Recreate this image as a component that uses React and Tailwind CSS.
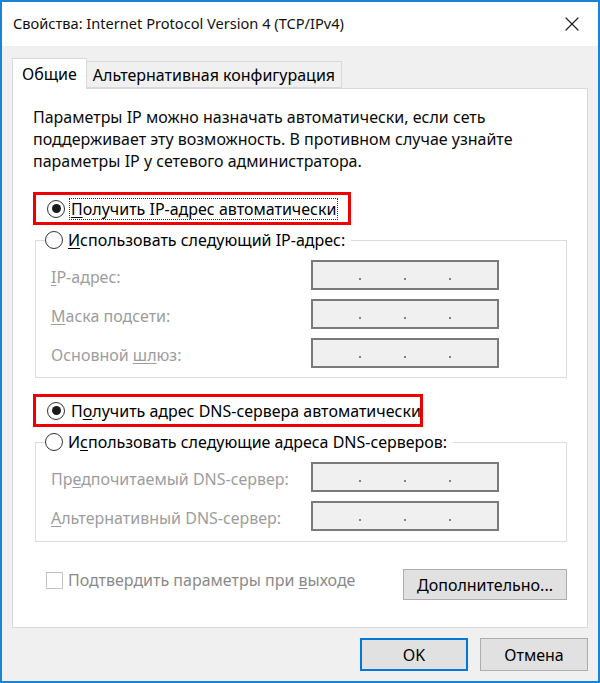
import { X } from 'lucide-react'

const font = { fontFamily: '"Noto Sans", "Open Sans", sans-serif' }

function Radio({ checked }) {
  return (
    <span className="w-[18px] h-[18px] rounded-full border-[1.5px] border-[#333] bg-white flex items-center justify-center shrink-0">
      {checked && <span className="w-[9px] h-[9px] rounded-full bg-[#1a1a1a]" />}
    </span>
  )
}

function IpField() {
  return (
    <div className="w-[188px] h-[30px] border-2 border-[#7a7a7a] bg-[#f0f0f0] flex items-end justify-center gap-[43px] pb-[8px]">
      <span className="w-[2px] h-[2px] bg-[#5a5a78] rounded-full" />
      <span className="w-[2px] h-[2px] bg-[#5a5a78] rounded-full" />
      <span className="w-[2px] h-[2px] bg-[#5a5a78] rounded-full" />
    </div>
  )
}

function FieldRow({ u, rest, pre = '' }) {
  return (
    <div className="flex items-center justify-between h-[30px]">
      <span className="text-[#9d9d9d] pt-[3px] whitespace-nowrap">
        {pre}
        <span className="underline underline-offset-2">{u}</span>
        {rest}
      </span>
      <IpField />
    </div>
  )
}

export default function App() {
  return (
    <div
      className="w-[600px] h-[683px] bg-[#f0f0f0] border-2 border-[#1883d7] flex flex-col text-[16px] text-black"
      style={font}
    >
      <div className="h-[44px] bg-white flex items-center justify-between pl-[11px] pr-[14px] shrink-0">
        <span className="text-[14.6px] text-[#111]">Свойства: Internet Protocol Version 4 (TCP/IPv4)</span>
        <X size={24} strokeWidth={1.2} className="text-[#222]" />
      </div>

      <div className="flex-1 flex flex-col px-[10px] pt-[11px]">
        <div className="flex items-end h-[31px]">
          <div className="h-[31px] px-[9px] bg-white border border-b-0 border-[#d9d9d9] flex items-center relative z-10 -mb-px">
            Общие
          </div>
          <div className="h-[27px] px-[6px] bg-[#f0f0f0] border border-l-0 border-[#d9d9d9] flex items-center">
            Альтернативная конфигурация
          </div>
        </div>

        <div className="h-[540px] bg-white border border-[#d9d9d9] pl-[20px] pr-[20px] pt-[17px] flex flex-col">
          <p className="leading-[22px] text-[#0a0a0a]">
            Параметры IP можно назначать автоматически, если сеть поддерживает эту возможность. В противном случае узнайте параметры IP у сетевого администратора.
          </p>

          <div className="mt-[20px] w-[318px] h-[33px] border-[3px] border-[#ee0000] flex items-center pl-[11px] gap-[4px] shrink-0">
            <Radio checked />
            <span className="border border-dotted border-[#333] px-[1px] leading-[20px] whitespace-nowrap">
              <span className="underline underline-offset-2">П</span>олучить IP-адрес автоматически
            </span>
          </div>

          <fieldset className="ml-[2px] w-[532px] border border-[#dcdcdc] px-[15px] pb-[9px]">
            <legend className="px-0 ml-[-6px]">
              <span className="flex items-center gap-[5px] h-[30px] pr-[6px] whitespace-nowrap">
                <Radio />
                <span>
                  <span className="underline underline-offset-2">И</span>спользовать следующий IP-адрес:
                </span>
              </span>
            </legend>
            <div className="flex flex-col gap-[9px] pr-[52px] mt-[5px]">
              <FieldRow u="I" rest="P-адрес:" />
              <FieldRow u="М" rest="аска подсети:" />
              <FieldRow pre="Основной " u="шл" rest="юз:" />
            </div>
          </fieldset>

          <div className="mt-[16px] w-[390px] h-[33px] border-[3px] border-[#ee0000] flex items-center pl-[11px] gap-[4px] shrink-0">
            <Radio checked />
            <span className="px-[2px] leading-[20px] whitespace-nowrap">
              П<span className="underline underline-offset-2">о</span>лучить адрес DNS-сервера автоматически
            </span>
          </div>

          <fieldset className="ml-[2px] w-[532px] border border-[#dcdcdc] px-[15px] pb-[10px]">
            <legend className="px-0 ml-[-6px]">
              <span className="flex items-center gap-[5px] h-[30px] pr-[6px] whitespace-nowrap">
                <Radio />
                <span>
                  И<span className="underline underline-offset-2">с</span>пользовать следующие адреса DNS-серверов:
                </span>
              </span>
            </legend>
            <div className="flex flex-col gap-[9px] pr-[52px] mt-[5px]">
              <FieldRow pre="Пр" u="е" rest="дпочитаемый DNS-сервер:" />
              <FieldRow u="А" rest="льтернативный DNS-сервер:" />
            </div>
          </fieldset>

          <div className="mt-[27px] flex items-start justify-between pl-[13px] w-[534px]">
            <div className="flex items-center gap-[5px] mt-[-1px]">
              <span className="w-[17px] h-[17px] border border-[#c4c4c4] bg-white" />
              <span className="text-[#8a8a8a] whitespace-nowrap">
                Подтвердить параметры при <span className="underline underline-offset-2">в</span>ыходе
              </span>
            </div>
            <button className="w-[164px] h-[31px] bg-[#e1e1e1] border border-[#adadad] whitespace-nowrap">
              <span className="underline underline-offset-2">Д</span>ополнительно...
            </button>
          </div>
        </div>

        <div className="flex justify-end gap-[12px] mt-[10px]">
          <button className="w-[108px] h-[33px] bg-[#e1e1e1] border-2 border-[#0078d7]">OK</button>
          <button className="w-[108px] h-[33px] bg-[#e1e1e1] border border-[#adadad]">Отмена</button>
        </div>
      </div>
    </div>
  )
}
